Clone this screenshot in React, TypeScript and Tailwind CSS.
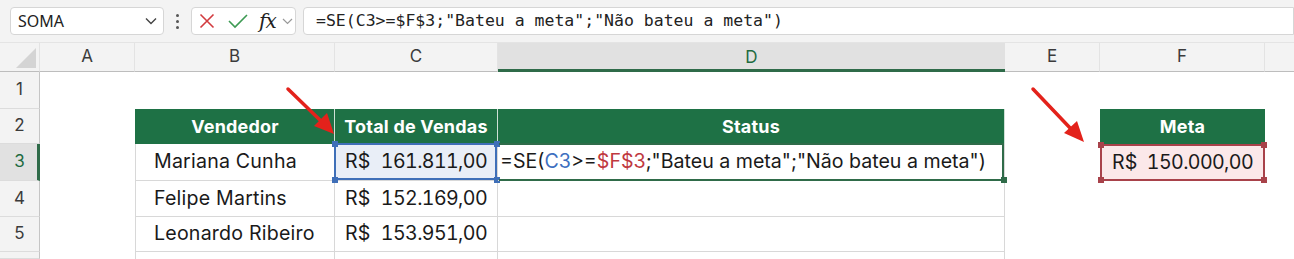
import React from "react"

const font = "font-['Inter','Noto_Sans',sans-serif]"

function Handle({ pos, color }: { pos: string; color: string }) {
  return <span className={`absolute w-[6px] h-[6px] ${pos} ${color}`} />
}

function ColHead({ label, selected }: { label: string; selected?: boolean }) {
  return (
    <div
      className={
        selected
          ? "flex items-center justify-center bg-[#e1e1e1] text-[#1e6b41] border-b-[3px] border-[#2f6b49] text-[17px] pt-[3px]"
          : "flex items-center justify-center bg-[#f3f3f3] text-[#3b3b3b] border-r border-r-[#e3e3e3] border-b border-b-[#bdbdbd] text-[17px]"
      }
    >
      {label}
    </div>
  )
}

function RowHead({ label, selected }: { label: string; selected?: boolean }) {
  return (
    <div
      className={
        selected
          ? "flex items-center justify-center bg-[#e1e1e1] text-[#1e6b41] border-r-[3px] border-r-[#2f6b49] border-b border-b-[#dcdcdc] text-[17px] pl-[2px]"
          : "flex items-center justify-center bg-[#f3f3f3] text-[#3b3b3b] border-r border-r-[#c5c5c5] border-b border-b-[#dcdcdc] text-[17px]"
      }
    >
      {label}
    </div>
  )
}

function Money({ value, pad = "px-[10px]" }: { value: string; pad?: string }) {
  return (
    <div className={`flex justify-between w-full ${pad}`}>
      <span>R$</span>
      <span className="tabular-nums tracking-[-0.6px]">{value}</span>
    </div>
  )
}

const cell = "flex items-center border-r border-b border-[#d8d8d8] text-[19.6px] text-[#1a1a1a] tracking-[0.2px]"
const green = "flex items-center justify-center bg-[#1e7145] text-white font-bold text-[18px] border-r border-r-[#cfe0d6] tracking-[0.2px]"

export default function App() {
  const rows = [
    { name: "Mariana Cunha", total: "161.811,00" },
    { name: "Felipe Martins", total: "152.169,00" },
    { name: "Leonardo Ribeiro", total: "153.951,00" },
  ]

  return (
    <div className={`relative w-[1294px] h-[259px] overflow-hidden bg-white ${font}`}>
      {/* formula bar */}
      <div className="h-[43px] bg-[#f3f3f3] flex items-center border-b border-[#e4e4e4]">
        <div className="ml-[10px] w-[154px] h-[28px] bg-white border border-[#d6d6d6] rounded-[4px] flex items-center justify-between pl-[7px] pr-[6px]">
          <span className="text-[16px] text-[#222] font-['Noto_Sans',sans-serif]">SOMA</span>
          <svg width="12" height="8" viewBox="0 0 12 8">
            <path d="M1 1.5 L6 6.5 L11 1.5" fill="none" stroke="#444" strokeWidth="1.4" />
          </svg>
        </div>
        <div className="w-[27px] flex flex-col items-center gap-[3px]">
          <span className="w-[3px] h-[3px] bg-[#555] rounded-full" />
          <span className="w-[3px] h-[3px] bg-[#555] rounded-full" />
          <span className="w-[3px] h-[3px] bg-[#555] rounded-full" />
        </div>
        <div className="w-[105px] h-[28px] bg-white border border-[#d6d6d6] rounded-[4px] flex items-center pl-[7px]">
          <svg width="16" height="16" viewBox="0 0 16 16">
            <path d="M1.5 1.5 L14.5 14.5 M14.5 1.5 L1.5 14.5" stroke="#d23b3f" strokeWidth="1.6" />
          </svg>
          <svg width="20" height="16" viewBox="0 0 20 16" className="ml-[13px]">
            <path d="M1 8 L7 14 L19 2" fill="none" stroke="#3d9a53" strokeWidth="1.6" />
          </svg>
          <span className="ml-[11px] text-[20px] italic font-['DejaVu_Serif',serif] text-[#222] leading-none tracking-[-1px]">fx</span>
          <svg width="11" height="7" viewBox="0 0 11 7" className="ml-[6px]">
            <path d="M1 1 L5.5 5.5 L10 1" fill="none" stroke="#999" strokeWidth="1.2" />
          </svg>
        </div>
        <div className="ml-[7px] flex-1 h-[28px] bg-white border border-[#d6d6d6] rounded-l-[4px] flex items-center pl-[12px]">
          <span className="font-['DejaVu_Sans_Mono',monospace] text-[16.5px] text-[#222] whitespace-pre">
            =SE(C3&gt;=$F$3;"Bateu a meta";"Não bateu a meta")
          </span>
        </div>
      </div>

      {/* sheet */}
      <div className="grid grid-cols-[40px_95px_200px_163px_507px_95px_165px_1fr] grid-rows-[29px_37px_35px_37px_36px_35px_1fr] h-[216px]">
        {/* column headers */}
        <div className="relative bg-[#f3f3f3] border-r border-r-[#e3e3e3] border-b border-b-[#bdbdbd]">
          <svg width="40" height="29" viewBox="0 0 40 29" className="absolute left-0 top-0">
            <path d="M36 5 L36 25 L16 25 Z" fill="#d4d4d4" />
          </svg>
        </div>
        <ColHead label="A" />
        <ColHead label="B" />
        <ColHead label="C" />
        <ColHead label="D" selected />
        <ColHead label="E" />
        <ColHead label="F" />
        <div className="bg-[#f3f3f3] border-b border-b-[#bdbdbd]" />

        {/* row 1 */}
        <RowHead label="1" />
        <div className="col-span-7" />

        {/* row 2 */}
        <RowHead label="2" />
        <div />
        <div className={`${green} border-l border-l-[#1e7145]`}>Vendedor</div>
        <div className={green}>Total de Vendas</div>
        <div className={`${green} border-r-[#1e7145]`}>Status</div>
        <div />
        <div className={`${green} border-r-0`}>Meta</div>
        <div />

        {/* rows 3-5 */}
        {rows.map((r, i) => (
          <React.Fragment key={r.name}>
            <RowHead label={String(i + 3)} selected={i === 0} />
            <div />
            <div className={`${cell} border-l pl-[18px]`}>{r.name}</div>
            {i === 0 ? (
              <div className={`${cell} relative bg-[#e9eef7]`}>
                <Money value={r.total} />
                <div className="absolute -left-px -top-px right-0 bottom-0 border-2 border-[#3f6fb8]" />
                <Handle pos="-left-[3px] -top-[3px]" color="bg-[#3f6fb8]" />
                <Handle pos="-right-[3px] -top-[3px]" color="bg-[#3f6fb8]" />
                <Handle pos="-left-[3px] -bottom-[3px]" color="bg-[#3f6fb8]" />
                <Handle pos="-right-[3px] -bottom-[3px]" color="bg-[#3f6fb8]" />
              </div>
            ) : (
              <div className={cell}>
                <Money value={r.total} />
              </div>
            )}
            {i === 0 ? (
              <div className={`${cell} relative pl-[2px] tracking-[0px] whitespace-nowrap`}>
                <span>
                  =SE(<span className="text-[#3d6fbf]">C3</span>&gt;=<span className="text-[#c0393f]">$F$3</span>;"Bateu a meta";"Não bateu a meta")
                </span>
                <div className="absolute left-[1px] -top-px right-0 -bottom-px border-2 border-l-0 border-[#2f6b49]" />
                <Handle pos="-right-[3px] -bottom-[3px]" color="bg-[#2f6b49]" />
              </div>
            ) : (
              <div className={cell} />
            )}
            <div />
            {i === 0 ? (
              <div className="relative flex items-center bg-[#fbe8e9] text-[19.6px] text-[#1a1a1a] tracking-[0.2px]">
                <Money value="150.000,00" pad="px-[12px]" />
                <div className="absolute inset-0 border-2 border-[#a8424a]" />
                <Handle pos="-left-[2px] -top-[2px]" color="bg-[#a8424a]" />
                <Handle pos="-right-[2px] -top-[2px]" color="bg-[#a8424a]" />
                <Handle pos="-left-[2px] -bottom-[2px]" color="bg-[#a8424a]" />
                <Handle pos="-right-[2px] -bottom-[2px]" color="bg-[#a8424a]" />
              </div>
            ) : (
              <div />
            )}
            <div />
          </React.Fragment>
        ))}

        {/* row 6, only its top edge shows */}
        <RowHead label="" />
        <div />
        <div className="border-l border-r border-[#d8d8d8]" />
        <div className="border-r border-[#d8d8d8]" />
        <div className="border-r border-[#d8d8d8]" />
        <div />
        <div />
        <div />
      </div>

      {/* red arrows */}
      <svg className="absolute left-0 top-0 pointer-events-none" width="1294" height="259" viewBox="0 0 1294 259">
        <line x1="288" y1="89" x2="322" y2="122" stroke="#e3221b" strokeWidth="3.5" strokeLinecap="round" />
        <path d="M334 134 L314 126 L327 113 Z" fill="#e3221b" />
        <line x1="1033" y1="89" x2="1072" y2="130" stroke="#e3221b" strokeWidth="3.5" strokeLinecap="round" />
        <path d="M1084 142 L1064 133 L1077 121 Z" fill="#e3221b" />
      </svg>
    </div>
  )
}
